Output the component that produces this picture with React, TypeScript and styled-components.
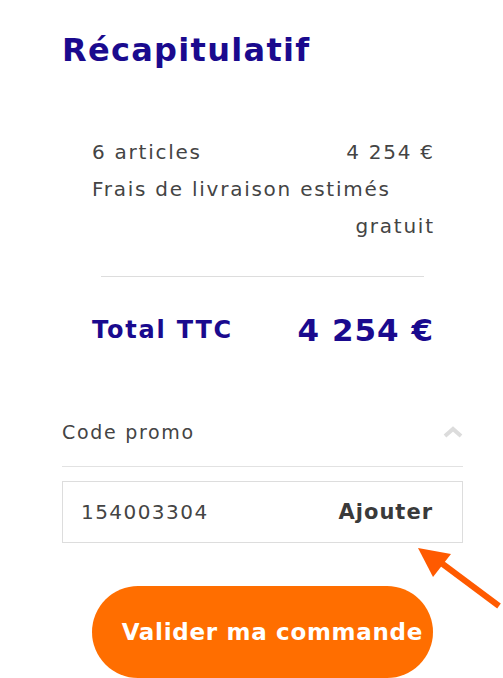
import React from "react";
import styled, { createGlobalStyle } from "styled-components";

const Global = createGlobalStyle`
  html, body { margin: 0; padding: 0; background: #fff; }
  body { font-family: "DejaVu Sans", "Open Sans", sans-serif; }
`;

const Page = styled.div`
  position: relative;
  width: 503px;
  height: 678px;
  overflow: hidden;
  padding: 28px 40px 0 62px;
  box-sizing: border-box;
`;

const Title = styled.h1`
  margin: 0;
  font-size: 32px;
  font-weight: 700;
  color: #1a0a8e;
  line-height: 44px;
  letter-spacing: 1.3px;
`;

const Summary = styled.div`
  margin-top: 62px;
  padding: 0 30px;
  display: flex;
  flex-direction: column;
`;

const Row = styled.div<{ $end?: boolean }>`
  display: flex;
  justify-content: ${(p) => (p.$end ? "flex-end" : "space-between")};
  font-size: 20px;
  line-height: 37px;
  color: #444;
  letter-spacing: 1.75px;
  span:last-child { margin-right: -1.75px; }
`;

const Divider = styled.hr`
  border: 0;
  border-top: 1px solid #ddd;
  margin: 31px 9px 0;
`;

const TotalRow = styled.div`
  display: flex;
  justify-content: space-between;
  align-items: center;
  margin-top: 35px;
  color: #1a0a8e;
  font-weight: 700;
`;

const TotalLabel = styled.span`
  font-size: 24px;
  letter-spacing: 1.8px;
`;

const TotalValue = styled.span`
  font-size: 31px;
  letter-spacing: 1px;
  margin-right: -1px;
`;

const Promo = styled.div`
  margin-top: 73px;
  display: flex;
  flex-direction: column;
`;

const PromoHeader = styled.div`
  display: flex;
  justify-content: space-between;
  align-items: center;
  padding-bottom: 23px;
  border-bottom: 1px solid #e2e2e2;
  font-size: 19px;
  letter-spacing: 1.7px;
  color: #444;
`;

const PromoBox = styled.div`
  margin-top: 14px;
  height: 62px;
  box-sizing: border-box;
  border: 1px solid #ddd;
  display: flex;
  align-items: center;
  justify-content: space-between;
  padding: 0 29px 0 18px;
  font-size: 20px;
  letter-spacing: 1.45px;
  color: #444;
`;

const AddButton = styled.span`
  font-weight: 700;
  font-size: 21px;
  letter-spacing: 1px;
  color: #3a3a3a;
`;

const Submit = styled.button`
  margin: 43px 0 0 30px;
  width: 341px;
  height: 92px;
  border: 0;
  border-radius: 46px;
  background: #ff6e00;
  color: #fff;
  font-family: inherit;
  font-size: 23px;
  font-weight: 700;
  letter-spacing: 0.7px;
  display: flex;
  align-items: center;
  justify-content: flex-end;
  padding-right: 10px;
  box-sizing: border-box;
  white-space: nowrap;
`;

const Arrow = styled.svg`
  position: absolute;
  left: 410px;
  top: 540px;
`;

export default function App() {
  return (
    <>
      <Global />
      <Page>
        <Title>Récapitulatif</Title>
        <Summary>
          <Row>
            <span>6 articles</span>
            <span>4 254 €</span>
          </Row>
          <Row>
            <span>Frais de livraison estimés</span>
          </Row>
          <Row $end>
            <span>gratuit</span>
          </Row>
          <Divider />
          <TotalRow>
            <TotalLabel>Total TTC</TotalLabel>
            <TotalValue>4 254 €</TotalValue>
          </TotalRow>
        </Summary>
        <Promo>
          <PromoHeader>
            <span>Code promo</span>
            <svg width="20" height="12" viewBox="0 0 20 12">
              <path d="M2 10 L10 3 L18 10" fill="none" stroke="#dcdcdc" strokeWidth="4" />
            </svg>
          </PromoHeader>
          <PromoBox>
            <span>154003304</span>
            <AddButton>Ajouter</AddButton>
          </PromoBox>
        </Promo>
        <Submit>Valider ma commande</Submit>
        <Arrow width="93" height="75" viewBox="0 0 93 75">
          <line x1="89" y1="66" x2="30" y2="22" stroke="#ff5a00" strokeWidth="6" />
          <polygon points="8,8 41,14 23,37" fill="#ff5a00" />
        </Arrow>
      </Page>
    </>
  );
}
